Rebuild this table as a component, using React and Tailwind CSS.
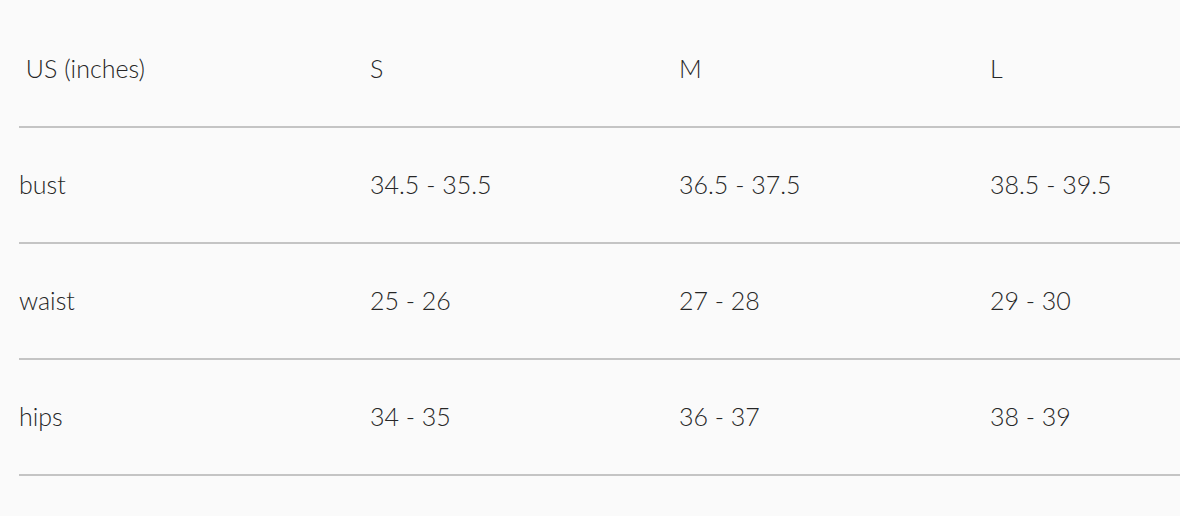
const header = ['\u00a0US (inches)', 'S', 'M', 'L'];

const rows = [
  ['bust', '34.5 - 35.5', '36.5 - 37.5', '38.5 - 39.5'],
  ['waist', '25 - 26', '27 - 28', '29 - 30'],
  ['hips', '34 - 35', '36 - 37', '38 - 39'],
];

const colWidths = ['w-[351px]', 'w-[309px]', 'w-[311px]', ''];

export default function App() {
  return (
    <div className="min-h-[516px] w-[1180px] bg-[#fafafa] pl-[19px] overflow-hidden" style={{ fontFamily: 'Lato, "Open Sans", sans-serif' }}>
      <table className="w-[1161px] border-collapse table-fixed text-[25px] leading-[28px] font-light text-[#262626]">
        <thead>
          <tr className="border-b-2 border-[#c4c4c4]">
            {header.map((h, i) => (
              <th key={i} className={`${colWidths[i]} text-left font-light pt-[10px] h-[127px] p-0 align-middle whitespace-pre`}>{h}</th>
            ))}
          </tr>
        </thead>
        <tbody>
          {rows.map((r) => (
            <tr key={r[0]} className="border-b-2 border-[#c4c4c4]">
              {r.map((c, i) => (
                <td key={i} className="h-[116px] p-0 pb-[3px] align-middle">{c}</td>
              ))}
            </tr>
          ))}
        </tbody>
      </table>
    </div>
  );
}
